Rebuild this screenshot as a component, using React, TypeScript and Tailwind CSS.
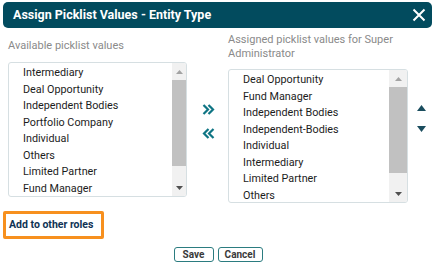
const available = [
  'Intermediary',
  'Deal Opportunity',
  'Independent Bodies',
  'Portfolio Company',
  'Individual',
  'Others',
  'Limited Partner',
  'Fund Manager',
]

const assigned = [
  'Deal Opportunity',
  'Fund Manager',
  'Independent Bodies',
  'Independent-Bodies',
  'Individual',
  'Intermediary',
  'Limited Partner',
  'Others',
]

const ScrollBar = ({ width, thumbHeight }: { width: string; thumbHeight: string }) => (
  <div className={`flex flex-col ${width} shrink-0 bg-[#f1f1f1]`}>
    <div className="flex h-[17px] items-center justify-center">
      <svg width="7" height="4" viewBox="0 0 7 4">
        <path d="M0 4 L3.5 0 L7 4 Z" fill="#a3a3a3" />
      </svg>
    </div>
    <div className={`${thumbHeight} bg-[#c1c1c1]`} />
    <div className="flex-1" />
    <div className="flex h-[17px] items-center justify-center">
      <svg width="7" height="4" viewBox="0 0 7 4">
        <path d="M0 0 L7 0 L3.5 4 Z" fill="#505050" />
      </svg>
    </div>
  </div>
)

const PickList = ({ items, bar }: { items: string[]; bar: React.ReactNode }) => (
  <div className="flex h-full overflow-hidden rounded-[3px] border border-[#d6dfe2] bg-white">
    <ul className="flex-1 pl-[14px] pt-[2px] text-[10.8px] leading-[16.5px] text-[#1c1c1c]">
      {items.map((item) => (
        <li key={item} className="whitespace-nowrap">
          {item}
        </li>
      ))}
    </ul>
    {bar}
  </div>
)

export default function App() {
  return (
    <div className="h-[272px] w-[435px] overflow-hidden bg-white font-['Roboto','Liberation_Sans',sans-serif]">
      <div className="mx-[3px] mt-[2px] flex h-[26px] items-center justify-between rounded-[5px] bg-[#024b5e] pl-[10px] pr-[5px]">
        <h1 className="text-[12.5px] font-bold text-white">Assign Picklist Values - Entity Type</h1>
        <svg width="14" height="14" viewBox="0 0 14 14" className="mr-[1px]">
          <path d="M1.5 1.5 L12.5 12.5 M12.5 1.5 L1.5 12.5" stroke="white" strokeWidth="2" />
        </svg>
      </div>

      <div className="flex">
        <div className="ml-[8px] w-[179px]">
          <p className="mt-[11px] text-[11px] leading-[14px] text-[#8a8a8a]">Available picklist values</p>
          <div className="mt-[9px] h-[135px]">
            <PickList items={available} bar={<ScrollBar width="w-[14px]" thumbHeight="h-[86px]" />} />
          </div>
        </div>

        <div className="flex w-[41px] flex-col items-center pt-[76px]">
          <svg width="13" height="11" viewBox="0 0 13 11" className="ml-[1px]">
            <path d="M1.5 1 L6 5.5 L1.5 10 M6.5 1 L11 5.5 L6.5 10" stroke="#0f7584" strokeWidth="2.2" fill="none" />
          </svg>
          <svg width="13" height="11" viewBox="0 0 13 11" className="ml-[1px] mt-[13px]">
            <path d="M11.5 1 L7 5.5 L11.5 10 M6.5 1 L2 5.5 L6.5 10" stroke="#0f7584" strokeWidth="2.2" fill="none" />
          </svg>
        </div>

        <div className="w-[180px]">
          <p className="mt-[5px] text-[11px] leading-[14px] text-[#8a8a8a]">
            Assigned picklist values for Super
            <br />
            Administrator
          </p>
          <div className="mt-[8px] h-[134px]">
            <PickList items={assigned} bar={<ScrollBar width="w-[18px]" thumbHeight="h-[86px]" />} />
          </div>
        </div>

        <div className="flex flex-1 flex-col items-center pt-[77px]">
          <svg width="9" height="6" viewBox="0 0 9 6">
            <path d="M0 6 L4.5 0 L9 6 Z" fill="#1a4d5e" />
          </svg>
          <svg width="9" height="6" viewBox="0 0 9 6" className="mt-[15px]">
            <path d="M0 0 L9 0 L4.5 6 Z" fill="#1a4d5e" />
          </svg>
        </div>
      </div>

      <div className="ml-[3px] mt-[8px] flex h-[28px] w-[101px] items-center rounded-[2px] border-[3px] border-[#f7901e] pl-[3px]">
        <span className="whitespace-nowrap text-[10.5px] font-bold text-[#0f3355]">Add to other roles</span>
      </div>

      <div className="mt-[8px] flex justify-center gap-[4px] pl-[1px]">
        <button className="h-[15px] w-[40px] rounded-[3px] border border-[#2b7c80] text-[10px] font-bold leading-none text-[#3a3a3a]">
          Save
        </button>
        <button className="h-[15px] w-[45px] rounded-[3px] border border-[#2b7c80] text-[10px] font-bold leading-none text-[#3a3a3a]">
          Cancel
        </button>
      </div>
    </div>
  )
}
